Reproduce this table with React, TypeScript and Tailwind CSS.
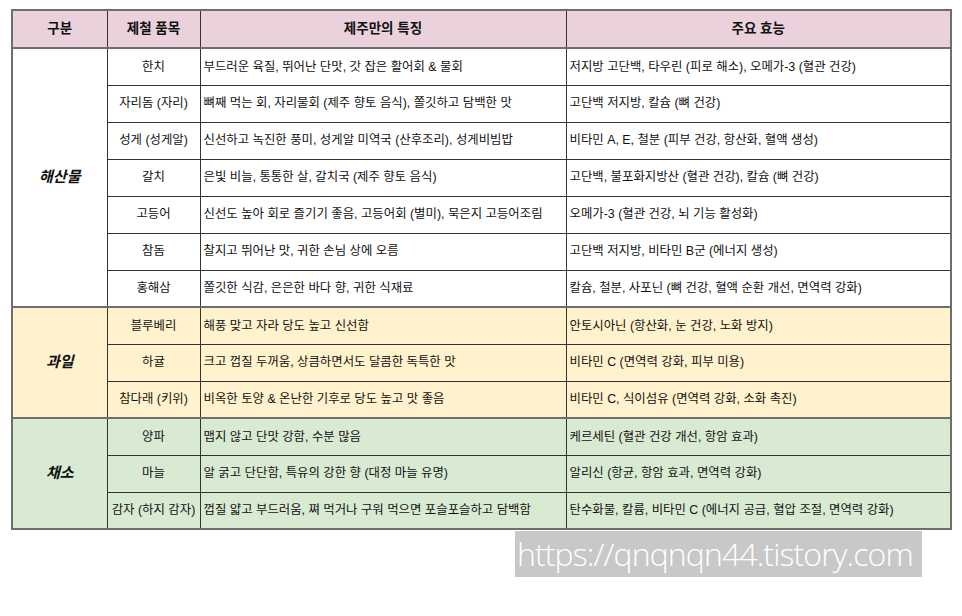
import React from 'react';

type Row = { item: string; feature: string; effect: string };
type Group = { name: string; bg: string; rows: Row[] };

const groups: Group[] = [
  {
    name: '해산물',
    bg: 'bg-white',
    rows: [
      { item: '한치', feature: '부드러운 육질, 뛰어난 단맛, 갓 잡은 활어회 & 물회', effect: '저지방 고단백, 타우린 (피로 해소), 오메가-3 (혈관 건강)' },
      { item: '자리돔 (자리)', feature: '뼈째 먹는 회, 자리물회 (제주 향토 음식), 쫄깃하고 담백한 맛', effect: '고단백 저지방, 칼슘 (뼈 건강)' },
      { item: '성게 (성게알)', feature: '신선하고 녹진한 풍미, 성게알 미역국 (산후조리), 성게비빔밥', effect: '비타민 A, E, 철분 (피부 건강, 항산화, 혈액 생성)' },
      { item: '갈치', feature: '은빛 비늘, 통통한 살, 갈치국 (제주 향토 음식)', effect: '고단백, 불포화지방산 (혈관 건강), 칼슘 (뼈 건강)' },
      { item: '고등어', feature: '신선도 높아 회로 즐기기 좋음, 고등어회 (별미), 묵은지 고등어조림', effect: '오메가-3 (혈관 건강, 뇌 기능 활성화)' },
      { item: '참돔', feature: '찰지고 뛰어난 맛, 귀한 손님 상에 오름', effect: '고단백 저지방, 비타민 B군 (에너지 생성)' },
      { item: '홍해삼', feature: '쫄깃한 식감, 은은한 바다 향, 귀한 식재료', effect: '칼슘, 철분, 사포닌 (뼈 건강, 혈액 순환 개선, 면역력 강화)' },
    ],
  },
  {
    name: '과일',
    bg: 'bg-[#fff2cc]',
    rows: [
      { item: '블루베리', feature: '해풍 맞고 자라 당도 높고 신선함', effect: '안토시아닌 (항산화, 눈 건강, 노화 방지)' },
      { item: '하귤', feature: '크고 껍질 두꺼움, 상큼하면서도 달콤한 독특한 맛', effect: '비타민 C (면역력 강화, 피부 미용)' },
      { item: '참다래 (키위)', feature: '비옥한 토양 & 온난한 기후로 당도 높고 맛 좋음', effect: '비타민 C, 식이섬유 (면역력 강화, 소화 촉진)' },
    ],
  },
  {
    name: '채소',
    bg: 'bg-[#d9ead3]',
    rows: [
      { item: '양파', feature: '맵지 않고 단맛 강함, 수분 많음', effect: '케르세틴 (혈관 건강 개선, 항암 효과)' },
      { item: '마늘', feature: '알 굵고 단단함, 특유의 강한 향 (대정 마늘 유명)', effect: '알리신 (항균, 항암 효과, 면역력 강화)' },
      { item: '감자 (하지 감자)', feature: '껍질 얇고 부드러움, 쪄 먹거나 구워 먹으면 포슬포슬하고 담백함', effect: '탄수화물, 칼륨, 비타민 C (에너지 공급, 혈압 조절, 면역력 강화)' },
    ],
  },
];

const font = "font-['Liberation_Sans','Noto_Sans_CJK_KR',sans-serif]";

export default function App() {
  return (
    <div className={`w-[962px] h-[616px] bg-white pl-[11px] pt-[9px] text-[#111] ${font}`}>
      <table className="w-[939px] table-fixed border-collapse border-2 border-[#6e6e6e] text-[12.4px]">
        <colgroup>
          <col className="w-[95px]" />
          <col className="w-[93px]" />
          <col className="w-[366px]" />
          <col className="w-[385px]" />
        </colgroup>
        <thead>
          <tr className="h-[38px] bg-[#ead1dc] border-b-2 border-[#6e6e6e]">
            <th className="border border-[#333] text-[13.5px] font-bold text-center">구분</th>
            <th className="border border-[#333] text-[13.5px] font-bold text-center">제철 품목</th>
            <th className="border border-[#333] text-[13.5px] font-bold text-center">제주만의 특징</th>
            <th className="border border-[#333] text-[13.5px] font-bold text-center">주요 효능</th>
          </tr>
        </thead>
        {groups.map((g) => (
          <tbody key={g.name} className={`${g.bg} border-t-2 border-[#6e6e6e]`}>
            {g.rows.map((r, i) => (
              <tr key={r.item} className="h-[37px]">
                {i === 0 && (
                  <td
                    rowSpan={g.rows.length}
                    className="border border-[#333] text-center text-[15px] font-bold italic"
                  >
                    {g.name}
                  </td>
                )}
                <td className="border border-[#333] text-center whitespace-nowrap leading-none">{r.item}</td>
                <td className="border border-[#333] pl-[3px] whitespace-nowrap leading-none">{r.feature}</td>
                <td className="border border-[#333] pl-[3px] whitespace-nowrap leading-none">{r.effect}</td>
              </tr>
            ))}
          </tbody>
        ))}
      </table>
      <div className="ml-[504px] mt-[1px] w-[407px] h-[46px] bg-[#c8c8c8] flex items-center overflow-hidden">
        <span className="pl-[2px] text-white text-[32px] font-light leading-none font-['Open_Sans',sans-serif] tracking-[-0.9px] whitespace-nowrap">
          https://qnqnqn44.tistory.com
        </span>
      </div>
    </div>
  );
}
